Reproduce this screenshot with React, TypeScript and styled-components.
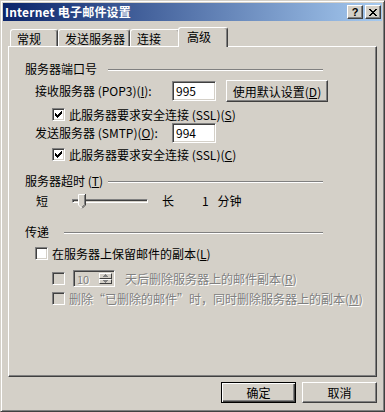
import styled, { createGlobalStyle } from "styled-components";

const GlobalStyle = createGlobalStyle`
  html, body {
    margin: 0;
    padding: 0;
    background: #d4d0c8;
  }
  body {
    font-family: "Noto Sans CJK SC", "Liberation Sans", sans-serif;
    font-size: 12px;
    line-height: 14px;
    color: #000;
  }
  * {
    box-sizing: border-box;
  }
`;

// Window frame
const Window = styled.div`
  width: 385px;
  height: 412px;
  background: #d4d0c8;
  border: 1px solid;
  border-color: #d4d0c8 #404040 #404040 #d4d0c8;
  box-shadow: inset 1px 1px #fff, inset -1px -1px #808080;
  padding: 2px;
  display: flex;
  flex-direction: column;
`;
const TitleBar = styled.div`
  height: 18px;
  display: flex;
  align-items: center;
  padding: 0 1px 0 2px;
  background: linear-gradient(to right, #0a246a, #a6caf0);
  color: #fff;
  font-weight: bold;
`;
const TitleText = styled.span`
  flex: 1;
  letter-spacing: 0.2px;
`;
const TitleButtons = styled.div`
  display: flex;
  gap: 2px;
`;
const CaptionButton = styled.div`
  width: 16px;
  height: 14px;
  background: #d4d0c8;
  border: 1px solid;
  border-color: #fff #404040 #404040 #fff;
  box-shadow: inset -1px -1px #808080;
  display: flex;
  align-items: center;
  justify-content: center;
  color: #000;
  font-family: "Liberation Sans", sans-serif;
  font-size: 11px;
  font-weight: bold;
  line-height: 12px;
`;

// Body
const Body = styled.div`
  flex: 1;
  display: flex;
  flex-direction: column;
  padding: 6px 5px 0;
`;
const TabRow = styled.div`
  height: 19px;
  display: flex;
  align-items: flex-end;
  padding-left: 2px;
`;
const Tab = styled.div<{ $active?: boolean; $w: number }>`
  position: relative;
  z-index: ${({ $active }) => ($active ? 1 : 0)};
  width: ${({ $w, $active }) => $w + ($active ? 4 : 0)}px;
  height: ${({ $active }) => ($active ? 20 : 17)}px;
  margin: 0 ${({ $active }) => ($active ? -2 : 0)}px
    ${({ $active }) => ($active ? -1 : 0)}px;
  padding: 2px 0 0 ${({ $active }) => ($active ? 8 : 6)}px;
  background: #d4d0c8;
  border-top: 1px solid #fff;
  border-left: 1px solid #fff;
  border-right: 1px solid #404040;
  border-radius: 3px 3px 0 0;
  box-shadow: inset -1px 0 #808080;
  white-space: nowrap;
`;
const Panel = styled.div`
  height: 331px;
  background: #d4d0c8;
  border-top: 1px solid #fff;
  border-left: 1px solid #fff;
  border-right: 1px solid #404040;
  border-bottom: 1px solid #404040;
  box-shadow: inset -1px -1px #808080;
  padding: 15px 0 0 16px;
  display: flex;
  flex-direction: column;
`;

// Group boxes
const GroupHeader = styled.div<{ $gap: number }>`
  width: 298px;
  height: 14px;
  display: flex;
  align-items: center;
  margin-top: ${({ $gap }) => $gap}px;
`;
const GroupLabel = styled.span<{ $w: number }>`
  width: ${({ $w }) => $w}px;
  white-space: nowrap;
`;
const GroupRule = styled.div`
  flex: 1;
  margin-top: 2px;
  border-top: 1px solid #808080;
  border-bottom: 1px solid #fff;
`;

// Rows
const Row = styled.div<{ $indent: number; $gap: number; $h: number }>`
  display: flex;
  align-items: center;
  height: ${({ $h }) => $h}px;
  margin-left: ${({ $indent }) => $indent}px;
  margin-top: ${({ $gap }) => $gap}px;
  white-space: nowrap;
`;
const FieldLabel = styled.span`
  width: 137px;
`;
const TextBox = styled.div`
  width: 44px;
  height: 20px;
  margin-right: 10px;
  padding: 2px 0 0 3px;
  background: #fff;
  border: 1px solid;
  border-color: #808080 #fff #fff #808080;
  box-shadow: inset 1px 1px #404040, inset -1px -1px #d4d0c8;
`;
const PushButton = styled.div<{ $w: number; $h: number; $default?: boolean }>`
  width: ${({ $w }) => $w}px;
  height: ${({ $h }) => $h}px;
  display: flex;
  align-items: center;
  justify-content: center;
  background: #d4d0c8;
  border: 1px solid;
  border-color: ${({ $default }) =>
    $default ? "#000" : "#fff #404040 #404040 #fff"};
  box-shadow: ${({ $default }) =>
    $default
      ? "inset 1px 1px #fff, inset -1px -1px #404040, inset -2px -2px #808080"
      : "inset -1px -1px #808080"};
  padding-top: 1px;
`;
const CheckBox = styled.span<{ $disabled?: boolean }>`
  width: 13px;
  height: 13px;
  flex: none;
  display: flex;
  align-items: center;
  justify-content: center;
  background: ${({ $disabled }) => ($disabled ? "#d4d0c8" : "#fff")};
  border: 1px solid;
  border-color: #808080 #fff #fff #808080;
  box-shadow: inset 1px 1px #404040, inset -1px -1px #d4d0c8;
  margin-right: 4px;
`;
const Muted = styled.span`
  color: #808080;
  text-shadow: 1px 1px 0 #fff;
`;
const Quote = styled.span<{ $open?: boolean }>`
  display: inline-block;
  width: 12px;
  text-align: ${({ $open }) => ($open ? "right" : "left")};
`;
const SliderBox = styled.div`
  position: relative;
  width: 88px;
  height: 16px;
  margin: 0 8px 0 18px;
`;
const SliderTrack = styled.div`
  position: absolute;
  left: 6px;
  right: 6px;
  top: 6px;
  height: 4px;
  border: 1px solid;
  border-color: #808080 #fff #fff #808080;
  box-shadow: inset 1px 1px #404040;
`;
const SliderThumb = styled.svg`
  position: absolute;
  left: 12px;
  top: 1px;
`;
const TimeoutValue = styled.span`
  margin-left: 28px;
  word-spacing: 6px;
`;
const Spinner = styled.div`
  width: 42px;
  height: 17px;
  margin: 0 10px 0 4px;
  display: flex;
  padding: 2px 2px 2px 3px;
  border: 1px solid;
  border-color: #808080 #fff #fff #808080;
  box-shadow: inset 1px 1px #404040, inset -1px -1px #d4d0c8;
  color: #808080;
  text-shadow: 1px 1px 0 #fff;
  line-height: 12px;
`;
const SpinValue = styled.span`
  flex: 1;
  font-size: 11px;
`;
const SpinButtons = styled.div`
  width: 13px;
  display: flex;
  flex-direction: column;
`;
const SpinButton = styled.div`
  flex: 1;
  display: flex;
  align-items: center;
  justify-content: center;
  border: 1px solid;
  border-color: #fff #404040 #404040 #fff;
`;
const Footer = styled.div`
  display: flex;
  justify-content: flex-end;
  gap: 6px;
  margin-top: 5px;
`;

const Check = () => (
  <svg width="7" height="7" viewBox="0 0 7 7" shapeRendering="crispEdges">
    <path
      d="M0 2h1v3h-1z M1 3h1v3h-1z M2 4h1v3h-1z M3 3h1v3h-1z M4 2h1v3h-1z M5 1h1v3h-1z M6 0h1v3h-1z"
      fill="#000"
    />
  </svg>
);

const Arrow = ({ up }: { up?: boolean }) => (
  <svg width="5" height="3" viewBox="0 0 5 3" shapeRendering="crispEdges">
    <path
      d={up ? "M2 0h1v1h-1z M1 1h3v1h-3z M0 2h5v1h-5z" : "M0 0h5v1h-5z M1 1h3v1h-3z M2 2h1v1h-1z"}
      fill="#808080"
    />
  </svg>
);

const App = () => {
  return (
    <>
      <GlobalStyle />
      <Window>
        <TitleBar>
          <TitleText>Internet 电子邮件设置</TitleText>
          <TitleButtons>
            <CaptionButton>?</CaptionButton>
            <CaptionButton>
              <svg width="8" height="7" viewBox="0 0 8 7" shapeRendering="crispEdges">
                <path
                  d="M0 0h2v1h-2z M6 0h2v1h-2z M1 1h2v1h-2z M5 1h2v1h-2z M2 2h4v1h-4z M3 3h2v1h-2z M2 4h4v1h-4z M1 5h2v1h-2z M5 5h2v1h-2z M0 6h2v1h-2z M6 6h2v1h-2z"
                  fill="#000"
                />
              </svg>
            </CaptionButton>
          </TitleButtons>
        </TitleBar>

        <Body>
          <TabRow>
            <Tab $w={48}>常规</Tab>
            <Tab $w={72}>发送服务器</Tab>
            <Tab $w={50}>连接</Tab>
            <Tab $w={46} $active>
              高级
            </Tab>
          </TabRow>

          <Panel>
            <GroupHeader $gap={0}>
              <GroupLabel $w={83}>服务器端口号</GroupLabel>
              <GroupRule />
            </GroupHeader>
            <Row $indent={10} $gap={4} $h={22}>
              <FieldLabel>
                接收服务器 (POP3)(<u>I</u>):
              </FieldLabel>
              <TextBox>995</TextBox>
              <PushButton $w={102} $h={22}>
                使用默认设置(<u>D</u>)
              </PushButton>
            </Row>
            <Row $indent={27} $gap={6} $h={13}>
              <CheckBox>
                <Check />
              </CheckBox>
              此服务器要求安全连接 (SSL)(<u>S</u>)
            </Row>
            <Row $indent={10} $gap={2} $h={20}>
              <FieldLabel>
                发送服务器 (SMTP)(<u>O</u>):
              </FieldLabel>
              <TextBox>994</TextBox>
            </Row>
            <Row $indent={27} $gap={5} $h={13}>
              <CheckBox>
                <Check />
              </CheckBox>
              此服务器要求安全连接 (SSL)(<u>C</u>)
            </Row>

            <GroupHeader $gap={13}>
              <GroupLabel $w={83}>
                服务器超时 (<u>T</u>)
              </GroupLabel>
              <GroupRule />
            </GroupHeader>
            <Row $indent={11} $gap={5} $h={16}>
              <span>短</span>
              <SliderBox>
                <SliderTrack />
                <SliderThumb width="8" height="15" viewBox="0 0 8 15">
                  <polygon points="0,0 8,0 8,11 4,15 0,11" fill="#d4d0c8" />
                  <polyline points="0.5,11 0.5,0.5 7,0.5" fill="none" stroke="#fff" />
                  <polyline points="7.5,0 7.5,11 4,14.5" fill="none" stroke="#404040" />
                  <polyline points="6.5,1 6.5,10.5 4,13" fill="none" stroke="#808080" />
                  <line x1="0.5" y1="11" x2="4" y2="14.5" stroke="#fff" />
                </SliderThumb>
              </SliderBox>
              <span>长</span>
              <TimeoutValue>1 分钟</TimeoutValue>
            </Row>

            <GroupHeader $gap={16}>
              <GroupLabel $w={39}>传递</GroupLabel>
              <GroupRule />
            </GroupHeader>
            <Row $indent={10} $gap={8} $h={13}>
              <CheckBox />
              在服务器上保留邮件的副本(<u>L</u>)
            </Row>
            <Row $indent={27} $gap={10} $h={17}>
              <CheckBox $disabled />
              <Spinner>
                <SpinValue>10</SpinValue>
                <SpinButtons>
                  <SpinButton>
                    <Arrow up />
                  </SpinButton>
                  <SpinButton>
                    <Arrow />
                  </SpinButton>
                </SpinButtons>
              </Spinner>
              <Muted>
                天后删除服务器上的邮件副本(<u>R</u>)
              </Muted>
            </Row>
            <Row $indent={27} $gap={5} $h={13}>
              <CheckBox $disabled />
              <Muted>
                删除<Quote $open>“</Quote>已删除的邮件<Quote>”</Quote>时，同时删除服务器上的副本(<u>M</u>)
              </Muted>
            </Row>
          </Panel>

          <Footer>
            <PushButton $w={75} $h={21} $default>
              确定
            </PushButton>
            <PushButton $w={75} $h={21}>
              取消
            </PushButton>
          </Footer>
        </Body>
      </Window>
    </>
  );
};

export default App;
